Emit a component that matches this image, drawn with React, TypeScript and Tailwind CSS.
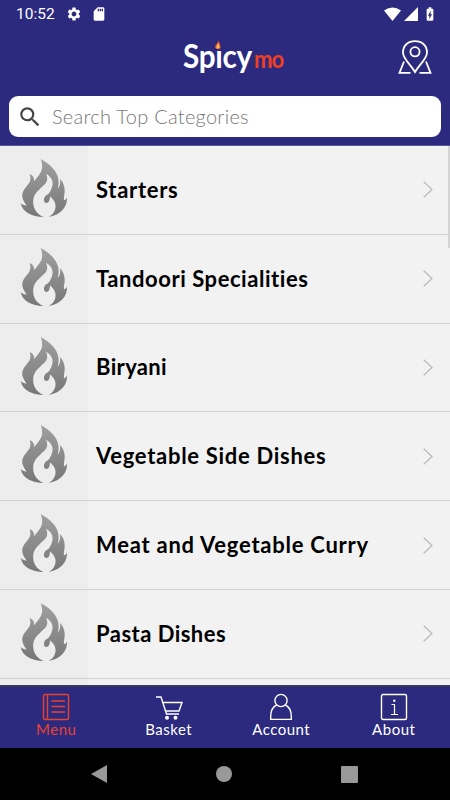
import type { ReactNode } from "react";
import { MdBatteryChargingFull, MdSdCard, MdSearch, MdSettings } from "react-icons/md";

interface Category {
  name: string;
  tracking: string;
}

const categories: Category[] = [
  { name: "Starters", tracking: "tracking-[0.7px]" },
  { name: "Tandoori Specialities", tracking: "tracking-[0.55px]" },
  { name: "Biryani", tracking: "tracking-[0.35px]" },
  { name: "Vegetable Side Dishes", tracking: "tracking-[0.71px]" },
  { name: "Meat and Vegetable Curry", tracking: "tracking-[0.75px]" },
  { name: "Pasta Dishes", tracking: "tracking-[0.47px]" },
];

const Flame = ({ id }: { id: string }) => (
  <svg viewBox="60 39 144 180" className="w-12 h-[60px]">
    <defs>
      <linearGradient id={id} x1="0" y1="0" x2="0" y2="1">
        <stop offset="0" stopColor="#a0a0a0" />
        <stop offset="1" stopColor="#777777" />
      </linearGradient>
    </defs>
    <path
      fill={`url(#${id})`}
      d="M122 42C149 57 171 77 175 101C177 115 175 124 173 131C180 125 182 113 180 102C193 116 196 132 193 149C191 158 191 163 193 166C197 164 200 161 201 156C203 184 185 209 146 216C162 208 169 192 166 178C164 167 157 161 150 154C150 164 147 174 140 174C131 174 130 163 134 156C138 149 145 150 149 142C153 134 160 123 157 108C155 99 148 91 138 86C144 99 142 109 136 116C121 131 103 143 100 163C97 188 108 207 131 216C94 215 67 201 62 174C66 178 72 181 80 182C60 155 65 141 79 125C91 112 94 103 89 87C99 91 103 98 102 109C113 94 130 80 126 59C126 53 124 47 122 42Z"
    />
  </svg>
);

const CategoryRow = ({ category, index }: { category: Category; index: number }) => (
  <li className="flex h-[88.8px] shrink-0 border-b-[1.5px] border-[#d2d2d2]">
    <div className="flex w-[88px] shrink-0 justify-center bg-[#ededed] pt-3">
      <Flame id={`flame-${index}`} />
    </div>
    <div className="flex flex-1 items-center justify-between bg-[#f2f2f2] pl-2 pr-[17px]">
      <span className={`text-[22px] leading-7 font-bold text-black whitespace-nowrap ${category.tracking}`}>
        {category.name}
      </span>
      <svg viewBox="0 0 10 17" className="h-[17px] w-[10px] fill-none stroke-[#b9b9b9]">
        <path d="M.7.7 9 8.5.7 16.3" strokeWidth="1.2" />
      </svg>
    </div>
  </li>
);

const StatusBar = () => (
  <div className="flex h-[27px] items-center justify-between pl-4 pr-3 text-white">
    <div className="flex items-center">
      <span className="w-[50px] pt-[2px] font-[Roboto] text-[15.5px] font-normal leading-none">10:52</span>
      <MdSettings className="size-4" />
      <MdSdCard className="ml-[9px] size-4" />
    </div>
    <div className="flex items-center">
      <svg viewBox="0 0 17 14" className="h-[14px] w-[17px] fill-current">
        <path d="M0 3.5Q8.5-2.5 17 3.5L8.5 14Z" />
      </svg>
      <svg viewBox="0 0 14 14" className="ml-[3px] h-[14px] w-[14px] fill-current">
        <path d="M14 0V14H0Z" />
      </svg>
      <MdBatteryChargingFull className="ml-1 size-4" />
    </div>
  </div>
);

const Logo = () => (
  <div className="relative grid grid-cols-[71.5px_32px] items-baseline whitespace-nowrap leading-[38px]">
    <span className="inline-block origin-left scale-x-[0.9] text-[33px] font-bold text-white tracking-[-0.35px]">
      Spıcy
    </span>
    <span className="inline-block origin-left scale-x-[0.92] text-[24px] font-bold text-[#f0401f] tracking-[-1.2px]">
      mo
    </span>
    <svg viewBox="61 11 8 10" className="absolute left-[31px] top-[4px] h-[10px] w-2">
      <path d="M64.5 11.5C68 14 66.5 16 67.5 17C69 21 62 21.5 62 17.5L63 15.5C64.5 15.5 65 13.5 64.5 11.5Z" fill="#ed4a27" />
      <path d="M65 14C67.5 17.5 66.5 19.7 64.8 19.7C62.5 19.5 63.5 17 65 14Z" fill="#ffc44c" />
    </svg>
  </div>
);

const PinIcon = () => (
  <svg viewBox="0 0 34 34" className="h-[34px] w-[34px] fill-none stroke-white" strokeWidth="1.8">
    <path d="M17 32C13 25 5 19 5 12.5C5 5.5 10 1.2 17 1.2S29 5.5 29 12.5C29 19 21 25 17 32Z" />
    <circle cx="17" cy="11.8" r="4.6" />
    <path d="M6 21.5 1.5 32.8H12.5M28 21.5 32.5 32.8H21.5" />
  </svg>
);

const Tab = ({ label, color, children }: { label: string; color: string; children: ReactNode }) => (
  <a className={`flex flex-1 flex-col items-center pt-[6px] ${color}`}>
    <svg viewBox="0 0 28 28" className="size-7 fill-none stroke-current" strokeWidth="1.4">
      {children}
    </svg>
    <span className="text-[15px] leading-[17px] tracking-[0.5px]">{label}</span>
  </a>
);

const App = () => {
  return (
    <div className="flex h-[800px] w-[450px] flex-col overflow-hidden bg-[#2b2a7f] font-[Lato,sans-serif]">
      <header className="h-[146px] shrink-0 border-b border-[#5a569a]">
        <StatusBar />
        <div className="grid h-[69px] grid-cols-[174.5px_104px_1fr] pl-2 pr-[18px]">
          <span />
          <div className="pt-[9px]">
            <Logo />
          </div>
          <div className="flex justify-end pt-[13px]">
            <PinIcon />
          </div>
        </div>
        <div className="mx-[9px] flex h-[41px] items-center rounded-[9px] bg-white pl-2">
          <MdSearch className="size-[26px] text-[#444]" />
          <span className="ml-[9px] pb-[2px] text-[20px] font-light tracking-[0.27px] text-[#777]">
            Search Top Categories
          </span>
        </div>
      </header>

      <main className="relative h-[539px] shrink-0 overflow-hidden bg-[#f2f2f2]">
        <ul className="flex flex-col">
          {categories.map((category, index) => (
            <CategoryRow key={category.name} category={category} index={index} />
          ))}
        </ul>
        <div className="h-2 w-[88px] bg-[#ededed]" />
        {/* scroll indicator */}
        <div className="absolute right-0 top-0 h-[102px] w-[2px] bg-[#d4d4d4]" />
      </main>

      <nav className="flex h-[63px] shrink-0 border-t-2 border-[#353b5d]">
        <Tab label="Menu" color="text-[#e8432f]">
          <rect x="1.5" y="1.5" width="25" height="25" rx="1.5" />
          <path d="M5.5 1.5V26.5M9.5 8H23M9.5 13.5H23M9.5 19H23" />
        </Tab>
        <Tab label="Basket" color="text-white">
          <path d="M1 4H6L11.5 21H24M7.7 9.5H27L24 18H10.5" />
          <g fill="currentColor" stroke="none">
            <circle cx="12" cy="24.8" r="2" />
            <circle cx="20.5" cy="24.8" r="2" />
          </g>
        </Tab>
        <Tab label="Account" color="text-white">
          <circle cx="14" cy="7.5" r="6.1" />
          <path d="M9.5 12C5.5 14 3.7 18 3.7 23.5V26.4H24.3V23.5C24.3 18 22.5 14 18.5 12" />
        </Tab>
        <Tab label="About" color="text-white">
          <rect x="1.5" y="1.5" width="25" height="25" rx="1.5" />
          <path d="M11.5 11.5H14.5V21.5M11 21.5H18" strokeWidth="1.2" />
          <circle cx="14.3" cy="7.7" r="1.2" fill="currentColor" stroke="none" />
        </Tab>
      </nav>

      <footer className="flex h-[52px] shrink-0 items-center justify-between bg-black pl-[91px] pr-[92px]">
        <svg viewBox="0 0 16 18" className="h-[18px] w-4 fill-[#999]">
          <path d="M16 0V18L0 9Z" />
        </svg>
        <div className="size-4 rounded-full bg-[#999]" />
        <div className="h-[17px] w-[17px] rounded-[1px] bg-[#999]" />
      </footer>
    </div>
  );
};

export default App;
